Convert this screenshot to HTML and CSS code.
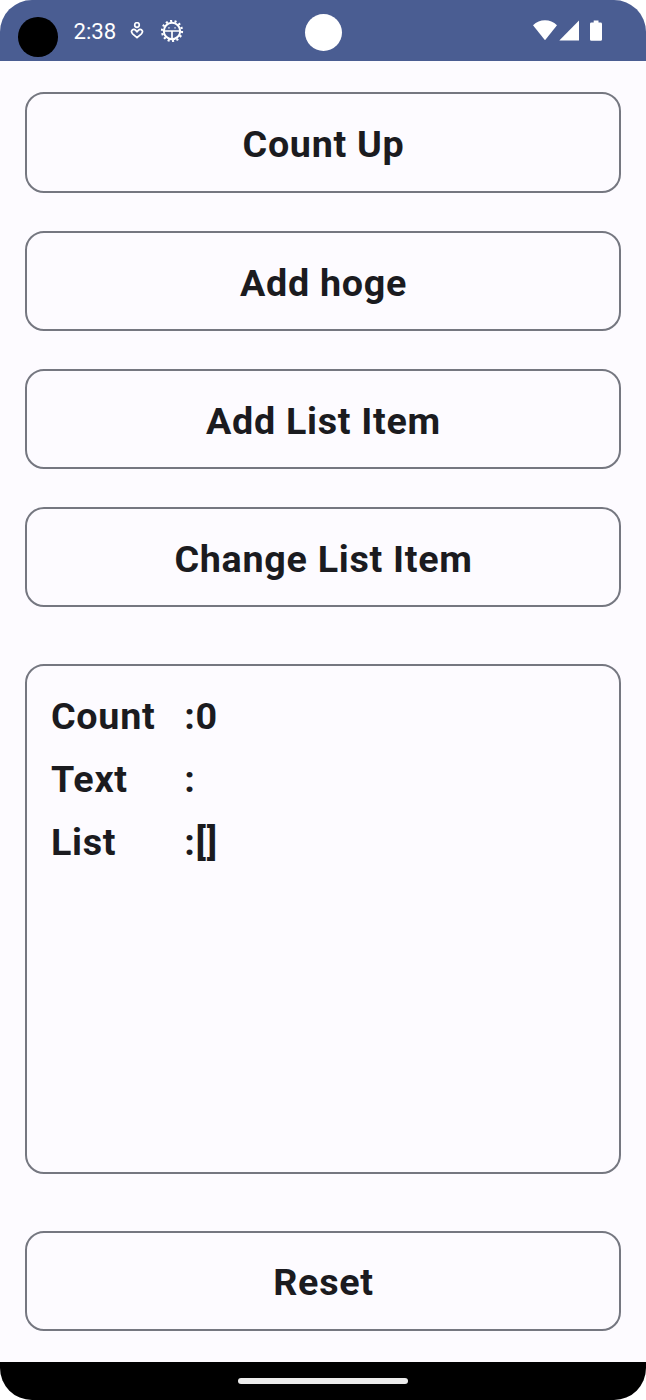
FILE: index.html
```html
<!DOCTYPE html>
<html lang="en">
<head>
    <meta charset="UTF-8">
    <title>Counter</title>
    <link rel="stylesheet" href="styles.css">
</head>
<body>
    <div class="screen">
        <header class="status-bar">
            <div class="status-left">
                <span class="dot"></span>
                <span class="clock">2:38</span>
                <svg class="icon-heart" width="14" height="18" viewBox="0 0 14 18" fill="none" stroke="#fff" stroke-width="1.7">
                    <circle cx="7" cy="3" r="2.3"/>
                    <path d="M7 15.6L2.6 11.8C-.2 8.9 3.4 5.8 5.7 8.3L7 9.7L8.3 8.3C10.6 5.8 14.2 8.9 11.4 11.8Z"/>
                </svg>
                <svg class="icon-gear" width="24" height="24" viewBox="0 0 24 24" fill="none" stroke="#fff">
                    <circle cx="12" cy="12" r="8.2" stroke-width="2"/>
                    <circle cx="12" cy="12" r="10" stroke-width="2.2" stroke-dasharray="2.1 2.388"/>
                    <path d="M4 12H20M12 12V20" stroke-width="1.7"/>
                    <path d="M8.3 8.8h1.3M14.4 8.8h1.3" stroke-width="1.2"/>
                </svg>
            </div>
            <span class="camera"></span>
            <div class="status-right">
                <svg width="70" height="22" viewBox="0 0 70 22" fill="#fff">
                    <path d="M0 5.2Q5.2 .3 12 .3T24 5.2L12 20.2Z"/>
                    <path d="M26.3 20.4L46 .6V20.4Z"/>
                    <path d="M57.3 2.6H60.7V.4H65.5V2.6H67.6Q69 2.6 69 4V19.4Q69 20.8 67.6 20.8H58.4Q57 20.8 57 19.4V4Q57 2.6 58.4 2.6Z"/>
                </svg>
            </div>
        </header>
        <main class="content">
            <button class="btn">Count Up</button>
            <button class="btn">Add hoge</button>
            <button class="btn">Add List Item</button>
            <button class="btn">Change List Item</button>
            <div class="panel">
                <div class="row"><span class="label">Count</span><span>:0</span></div>
                <div class="row"><span class="label">Text</span><span>:</span></div>
                <div class="row"><span class="label">List</span><span>:[]</span></div>
            </div>
            <button class="btn">Reset</button>
        </main>
        <footer class="nav-bar">
            <span class="handle"></span>
        </footer>
    </div>
</body>
</html>
```
FILE: styles.css
```css
body {
    margin: 0;
    background: #fff;
    font-family: Roboto, sans-serif;
}
.screen {
    display: flex;
    flex-direction: column;
    width: 646px;
    height: 1400px;
    border-radius: 32px;
    background: #fdfbff;
    overflow: hidden;
}
.status-bar {
    display: grid;
    grid-template-columns: 1fr 37px 1fr;
    height: 61px;
    flex-shrink: 0;
    background: #4a5d92;
}
.status-left {
    display: flex;
    align-items: flex-start;
    padding-left: 18px;
}
.dot {
    width: 39.5px;
    height: 39.5px;
    margin-top: 17px;
    border-radius: 50%;
    background: #000;
}
.clock {
    margin: 18px 0 0 16px;
    width: 44px;
    font-size: 22.2px;
    line-height: 27px;
    color: #fff;
}
.icon-heart {
    margin: 22px 0 0 12.5px;
}
.icon-gear {
    margin: 19px 0 0 15.5px;
}
.camera {
    width: 37px;
    height: 37px;
    margin-top: 14px;
    border-radius: 50%;
    background: #fff;
}
.status-right {
    display: flex;
    justify-content: flex-end;
    padding: 20px 43px 0 0;
}
.content {
    display: flex;
    flex-direction: column;
    flex-grow: 1;
    box-sizing: border-box;
    padding: 31.4px 25px 31px;
}
.btn {
    box-sizing: border-box;
    height: 100.5px;
    flex-shrink: 0;
    margin: 0 0 37.7px;
    padding: 3.4px 0 0 1px;
    border: 2px solid #757780;
    border-radius: 19px;
    background: none;
    color: #1b1b1f;
    font-family: inherit;
    font-size: 37.7px;
    font-weight: bold;
    letter-spacing: 0.7px;
}
.btn:last-child {
    margin: 0;
}
.panel {
    box-sizing: border-box;
    flex-grow: 1;
    margin: 19px 0 57px;
    padding: 18.4px 24px;
    border: 2px solid #757780;
    border-radius: 19px;
}
.row {
    display: flex;
    height: 62.9px;
    align-items: center;
    color: #1b1b1f;
    font-size: 37.7px;
    font-weight: bold;
    letter-spacing: 0.7px;
}
.label {
    width: 133.3px;
}
.nav-bar {
    display: flex;
    justify-content: center;
    height: 38px;
    flex-shrink: 0;
    background: #000;
}
.handle {
    width: 170px;
    height: 6px;
    margin-top: 16px;
    border-radius: 3px;
    background: #ececec;
}
```
